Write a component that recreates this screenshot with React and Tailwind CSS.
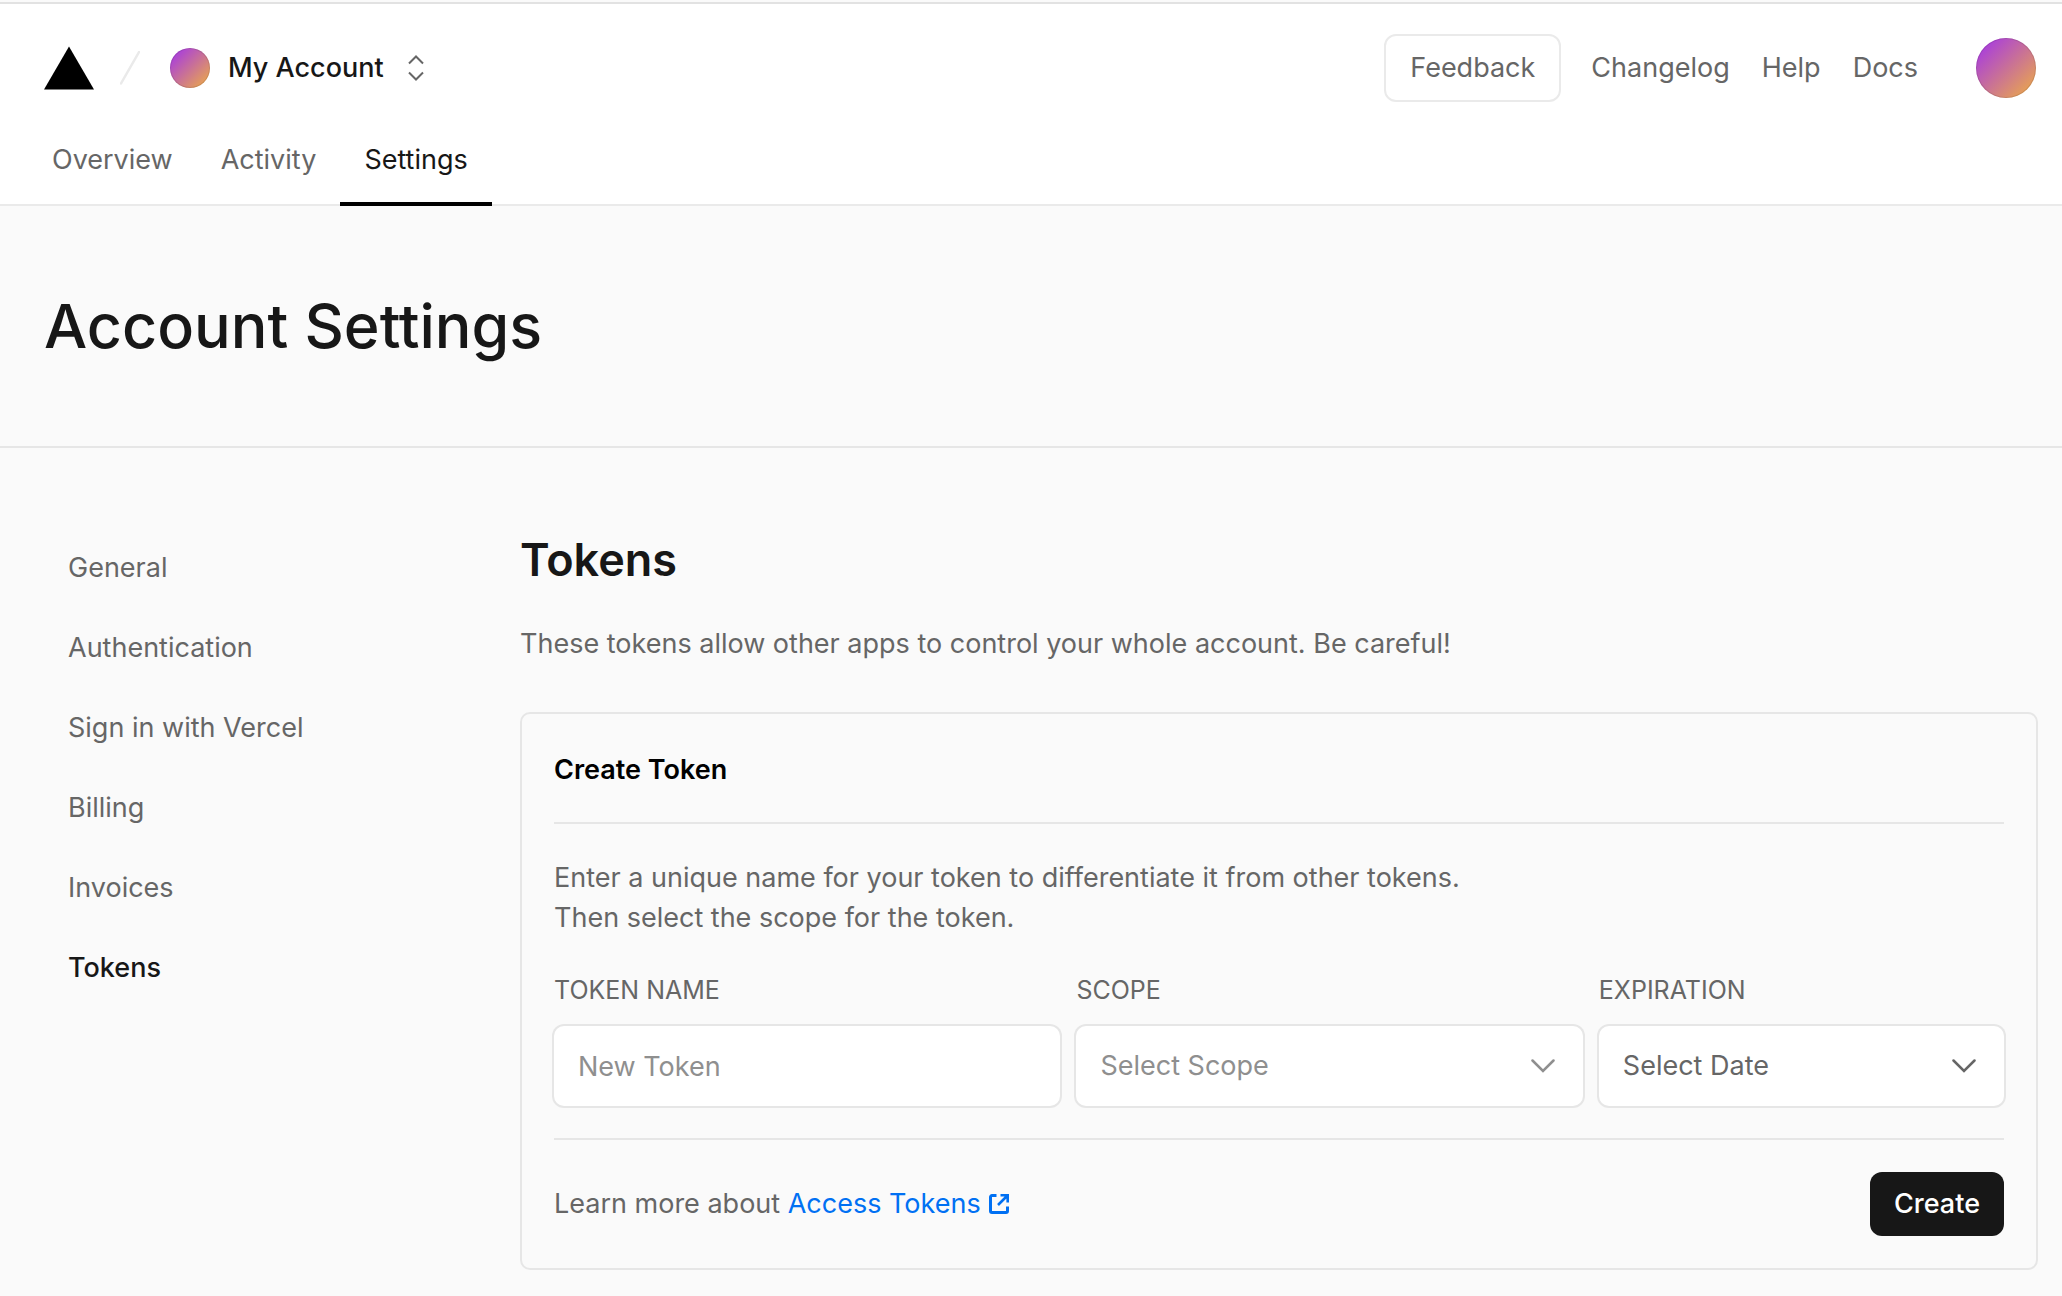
const tabs = [
  { label: "Overview" },
  { label: "Activity" },
  { label: "Settings", active: true },
];

const links = ["Changelog", "Help", "Docs"];

const sections = [
  { label: "General" },
  { label: "Authentication" },
  { label: "Sign in with Vercel" },
  { label: "Billing" },
  { label: "Invoices" },
  { label: "Tokens", active: true },
];

function Logo() {
  return (
    <svg viewBox="0 0 50 44" className="h-11 w-[50px] text-black" aria-label="Vercel">
      <path d="M25 0.5 50 43.5H0Z" fill="currentColor" />
    </svg>
  );
}

function Slash() {
  return (
    <svg viewBox="0 0 20 34" className="h-[34px] w-5 text-[#eaeaea]" fill="none" aria-hidden="true">
      <path d="M19 1 1 32.5" stroke="currentColor" strokeWidth="2.5" strokeLinecap="round" />
    </svg>
  );
}

function Switcher() {
  return (
    <svg viewBox="0 0 16 28" className="h-7 w-4 text-[#666]" fill="none" aria-hidden="true">
      <path d="M1 9.5 8 2.5 15 9.5M1 18.5 8 25.5 15 18.5" stroke="currentColor" strokeWidth="2" />
    </svg>
  );
}

function Chevron() {
  return (
    <svg viewBox="0 0 24 14" className="h-3.5 w-6" fill="none" aria-hidden="true">
      <path d="M1.5 1.5 12 12 22.5 1.5" stroke="currentColor" strokeWidth="2.5" strokeLinecap="round" />
    </svg>
  );
}

function External() {
  return (
    <svg viewBox="0 0 20 20" className="h-5 w-5" fill="none" aria-hidden="true">
      <path d="M7.5 1.5H3A1.5 1.5 0 0 0 1.5 3V17A1.5 1.5 0 0 0 3 18.5H17A1.5 1.5 0 0 0 18.5 17V12.5" stroke="currentColor" strokeWidth="3" />
      <path d="M11.5 1.3H18.7V8.5M18 2 9 11" stroke="currentColor" strokeWidth="2.6" />
    </svg>
  );
}

function SelectField({ id, label, placeholder, grow, tone }) {
  return (
    <div className={`${grow} basis-0 min-w-0`}>
      <label htmlFor={id} className="block text-[25px] leading-8 text-[#666]">{label}</label>
      <div className={`relative mt-5 ${tone}`}>
        <select
          id={id}
          className="block h-20 w-full appearance-none rounded-[10px] bg-white pr-16 pl-6 text-[27px] ring-2 ring-[#e6e6e6]"
        >
          <option>{placeholder}</option>
        </select>
        <span className="pointer-events-none absolute inset-y-0 right-7 flex items-center">
          <Chevron />
        </span>
      </div>
    </div>
  );
}

export default function App() {
  return (
    <div className="min-h-screen bg-[#fafafa] pt-0.5 font-[Inter,'Liberation_Sans',sans-serif] text-[27px] leading-10 text-[#666]">
      <header className="border-y-2 border-t-[#e2e2e2] border-b-[#eaeaea] bg-white">
        <div className="flex h-32 items-center justify-between pr-[26px] pl-11">
          <div className="flex items-center">
            <a href="#home"><Logo /></a>
            <span className="mx-[26px]"><Slash /></span>
            <button className="flex items-center gap-[18px] pl-1 font-medium text-[#171717]">
              <span className="h-10 w-10 rounded-full bg-[linear-gradient(135deg,#a030f0,#f0b040)] inset-ring-1 inset-ring-black/10" />
              My Account
              <span className="ml-1.5"><Switcher /></span>
            </button>
          </div>
          <div className="flex items-center">
            <button className="h-[68px] rounded-xl border-2 border-[#eaeaea] px-6">Feedback</button>
            <nav className="ml-[30px] flex gap-8">
              {links.map((label) => (
                <a key={label} href={`#${label.toLowerCase()}`}>{label}</a>
              ))}
            </nav>
            <button
              aria-label="Account menu"
              className="ml-[58px] h-[60px] w-[60px] rounded-full bg-[linear-gradient(135deg,#a030f0,#f0b040)] inset-ring-1 inset-ring-black/10"
            />
          </div>
        </div>
        <nav className="-mb-0.5 flex h-[74px] px-7">
          {tabs.map(({ label, active }) => (
            <a
              key={label}
              href={`#${label.toLowerCase()}`}
              className={active ? "border-b-4 border-black px-6 pt-2 text-[#171717]" : "px-6 pt-2"}
            >
              {label}
            </a>
          ))}
        </nav>
      </header>

      <div className="flex h-[242px] items-center border-b-2 border-[#e6e6e6] px-11">
        <h1 className="text-[61px] leading-[80px] font-medium text-[#171717]">Account Settings</h1>
      </div>

      <div className="flex pt-20 pr-6">
        <nav className="flex w-[520px] shrink-0 flex-col pl-[68px]">
          {sections.map(({ label, active }) => (
            <a
              key={label}
              href={`#${label.toLowerCase().replaceAll(" ", "-")}`}
              className={active ? "py-5 font-medium text-[#171717]" : "py-5"}
            >
              {label}
            </a>
          ))}
        </nav>

        <main className="min-w-0 flex-1">
          <h2 className="text-[45px] leading-[64px] font-semibold text-[#171717]">Tokens</h2>
          <p className="mt-8">These tokens allow other apps to control your whole account. Be careful!</p>

          <section className="mt-12 rounded-[10px] border-2 border-[#e6e6e6] px-8 pb-8">
            <h3 className="border-b-2 border-[#e6e6e6] pt-9 pb-8 font-semibold text-black">Create Token</h3>
            <p className="mt-[34px]">
              Enter a unique name for your token to differentiate it from other tokens.
              <br />
              Then select the scope for the token.
            </p>
            <div className="mt-9 flex gap-4">
              <div className="min-w-0 grow-5 basis-0">
                <label htmlFor="name" className="block text-[25px] leading-8">TOKEN NAME</label>
                <input
                  id="name"
                  type="text"
                  placeholder="New Token"
                  className="mt-5 block h-20 w-full rounded-[10px] bg-white px-6 ring-2 ring-[#e6e6e6] placeholder:text-[#8f8f8f]"
                />
              </div>
              <SelectField id="scope" label="SCOPE" placeholder="Select Scope" grow="grow-5" tone="text-[#8f8f8f]" />
              <SelectField id="expiration" label="EXPIRATION" placeholder="Select Date" grow="grow-4" tone="text-[#666]" />
            </div>
            <div className="mt-8 flex items-center justify-between border-t-2 border-[#e6e6e6] pt-8">
              <p>
                Learn more about{" "}
                <a href="#access-tokens" className="inline-flex items-center gap-2 text-[#0070f3]">
                  Access Tokens <External />
                </a>
              </p>
              <button className="h-16 rounded-xl bg-[#171717] px-6 font-medium text-white">Create</button>
            </div>
          </section>
        </main>
      </div>
    </div>
  );
}
